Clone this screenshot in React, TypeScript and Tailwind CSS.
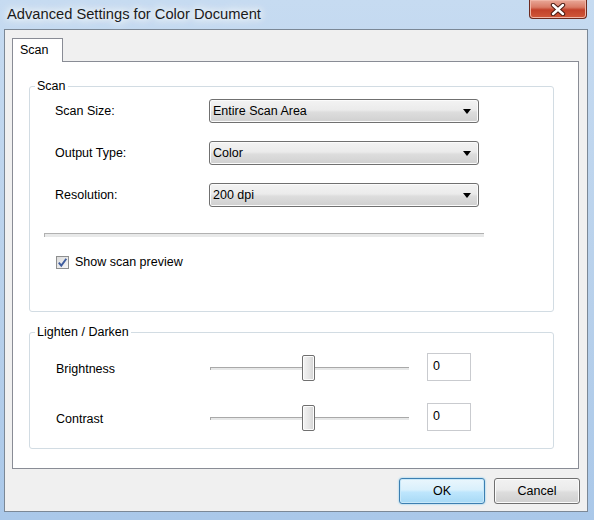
import React from 'react';

const Select = ({ value }: { value: string }) => (
  <div className="w-[270px] h-[24px] rounded-[3px] border border-[#707070] bg-[linear-gradient(#f3f3f3,#ebebeb_45%,#dddddd_55%,#d0d0d0)] flex items-center justify-between pl-[3px] pr-[7px] shadow-[inset_0_0_0_1px_#fbfbfb]">
    <span className="text-[12.5px] leading-[15px]">{value}</span>
    <svg width="8" height="5" viewBox="0 0 8 5">
      <path d="M0 0h8L4 5z" fill="#000" />
    </svg>
  </div>
);

const Slider = ({ pos }: { pos: number }) => (
  <div className="relative w-[199px] h-[28px]">
    <div className="absolute left-0 right-0 top-[14px] h-[3px] border-t border-l border-[#a9a9a9] bg-[#e7e8e8]" />
    <div
      className="absolute top-[2px] w-[13px] h-[26px] rounded-[2px] border border-[#707070] bg-[linear-gradient(90deg,#f4f4f4,#e4e4e4_60%,#d2d2d2)] shadow-[inset_0_0_0_1px_#fcfcfc]"
      style={{ left: pos }}
    />
  </div>
);

const NumberBox = ({ value }: { value: string }) => (
  <div className="ml-[18px] w-[44px] h-[28px] border border-[#c9cbcf] bg-white pl-[5px] pt-[5px] text-[12.5px] leading-[15px]">
    {value}
  </div>
);

export default function App() {
  return (
    <div className="w-[594px] h-[520px] overflow-hidden flex flex-col bg-[linear-gradient(180deg,#c6dbf1,#b7d0eb_60%,#aac8e9)] text-black font-['Liberation_Sans',Arial,sans-serif]">
      {/* Title bar */}
      <div className="relative h-[29px] shrink-0 pl-[7px] pt-[2px]">
        <span className="text-[14.7px] leading-[18px] text-[#1b1b1b] [text-shadow:0_0_6px_#fff,0_0_10px_#fff,0_0_14px_#eef5fc]">
          Advanced Settings for Color Document
        </span>
        <div className="absolute right-[7px] top-0 w-[58px] h-[19px] rounded-b-[4px] border border-t-0 border-[#6d2a1f] bg-[linear-gradient(#e9a898,#d97b66_40%,#c2412a_55%,#d0583a)] flex items-center justify-center shadow-[inset_0_0_0_1px_#f0b5a6]">
          <svg width="16" height="13" viewBox="0 0 16 13">
            <path d="M3 2l10 9M13 2L3 11" stroke="#4a1a12" strokeWidth="4.4" strokeLinecap="round" />
            <path d="M3 2l10 9M13 2L3 11" stroke="#fff" strokeWidth="2.4" strokeLinecap="round" />
          </svg>
        </div>
      </div>

      {/* Client area */}
      <div className="ml-[4px] w-[584px] h-[483px] shrink-0 border border-[#7b8896] bg-[#f0f0f0] pl-[7px] pr-[7px] pt-[8px] flex flex-col">
        {/* Tabs */}
        <div className="flex">
          <div className="relative z-10 -mb-px h-[24px] w-[51px] border border-b-0 border-[#898c95] bg-white pl-[7px] pt-[4px] text-[12.5px] leading-[15px]">
            Scan
          </div>
        </div>

        {/* Tab page */}
        <div className="w-[567px] h-[408px] border border-[#898c95] bg-white pl-[16px] pt-[17px] text-[12.5px] leading-[15px]">
          <fieldset className="w-[525px] h-[233px] border border-[#d2dce3] rounded-[3px] p-0 m-0">
            <legend className="ml-[5px] px-[2px] leading-[15px]">Scan</legend>
            <div className="pl-[25px] pt-[5px] flex flex-col gap-[18px]">
              <div className="flex items-center h-[24px]">
                <span className="w-[154px]">Scan Size:</span>
                <Select value="Entire Scan Area" />
              </div>
              <div className="flex items-center h-[24px]">
                <span className="w-[154px]">Output Type:</span>
                <Select value="Color" />
              </div>
              <div className="flex items-center h-[24px]">
                <span className="w-[154px]">Resolution:</span>
                <Select value="200 dpi" />
              </div>
            </div>
            <div className="ml-[14px] mt-[26px] w-[440px] h-[4px] border-t border-l border-[#b1b1b1] bg-[#e8e9e9]" />
            <div className="ml-[26px] mt-[18px] flex items-center gap-[6px]">
              <div className="w-[13px] h-[13px] border border-[#8e8f8f] bg-[linear-gradient(135deg,#dcdcdc,#f6f6f6)] flex items-center justify-center">
                <svg width="11" height="11" viewBox="0 0 11 11">
                  <path d="M1.8 5.6L4.3 8.6L9.3 1.8" fill="none" stroke="#3f5d9e" strokeWidth="1.9" />
                </svg>
              </div>
              <span>Show scan preview</span>
            </div>
          </fieldset>

          <fieldset className="mt-[13px] w-[525px] h-[124px] border border-[#d2dce3] rounded-[3px] p-0 m-0">
            <legend className="ml-[5px] px-[2px] leading-[15px]">Lighten / Darken</legend>
            <div className="pl-[26px] pt-[13px] flex flex-col gap-[22px]">
              <div className="flex h-[28px]">
                <span className="w-[154px] pt-[9px]">Brightness</span>
                <Slider pos={92} />
                <NumberBox value="0" />
              </div>
              <div className="flex h-[28px]">
                <span className="w-[154px] pt-[9px]">Contrast</span>
                <Slider pos={92} />
                <NumberBox value="0" />
              </div>
            </div>
          </fieldset>
        </div>

        {/* Buttons */}
        <div className="mt-[9px] flex justify-end gap-[9px] text-[12.5px]">
          <button className="w-[86px] h-[26px] rounded-[3px] border border-[#3c7fb1] bg-[linear-gradient(#eaf6fd,#d9f0fc_45%,#bee6fd_55%,#a7d9f5)] shadow-[inset_0_0_0_1px_#c8e8f9,0_0_2px_#6cc3ee]">
            OK
          </button>
          <button className="w-[86px] h-[26px] rounded-[3px] border border-[#707070] bg-[linear-gradient(#f2f2f2,#ebebeb_45%,#dddddd_55%,#cfcfcf)] shadow-[inset_0_0_0_1px_#fbfbfb]">
            Cancel
          </button>
        </div>
      </div>
    </div>
  );
}
